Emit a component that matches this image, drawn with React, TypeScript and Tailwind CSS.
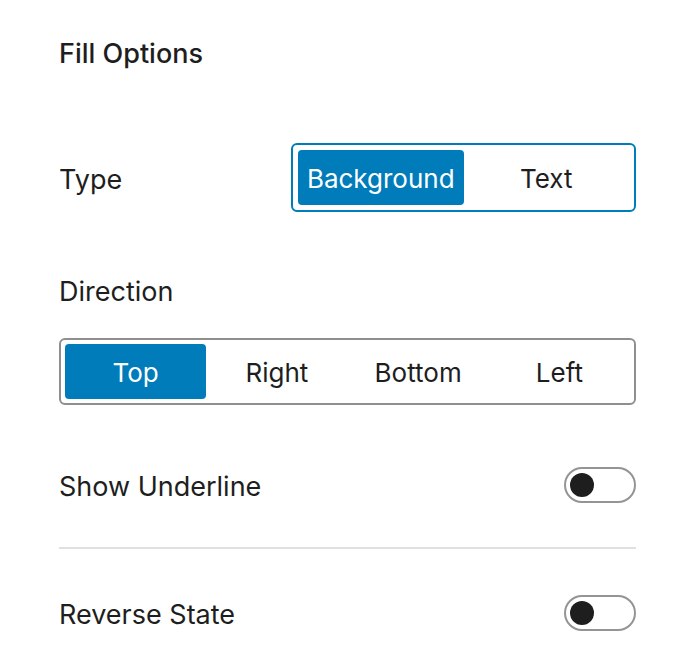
import { useState } from 'react';

function Toggle() {
    return (
        <div className="w-[72px] h-[36px] rounded-full border-2 border-[#949494] bg-white flex items-center px-[4px]">
            <div className="w-[24px] h-[24px] rounded-full bg-[#1e1e1e]" />
        </div>
    );
}

export default function App() {
    const [fillType, setFillType] = useState('Background');
    const [direction, setDirection] = useState('Top');

    return (
        <div
            className="w-[686px] h-[666px] bg-white pl-[59px] pr-[50px] text-[#1e1e1e]"
            style={{ fontFamily: 'Inter, "Noto Sans", sans-serif' }}
        >
            {/* Header */}
            <h2 className="pt-[34px] text-[27px] leading-[40px] font-medium">Fill Options</h2>

            {/* Type */}
            <div className="mt-[69px] flex items-center justify-between h-[69px]">
                <span className="text-[27px] leading-[36px] pt-[4px]">Type</span>
                <div className="w-[345px] h-[69px] border-2 border-[#007cba] rounded-[6px] p-[5px] flex">
                    {['Background', 'Text'].map((t) => (
                        <button
                            key={t}
                            onClick={() => setFillType(t)}
                            className={`flex-1 rounded-[4px] text-[26px] pt-[2px] ${fillType === t ? 'bg-[#007cba] text-white' : 'text-[#1e1e1e]'}`}
                        >
                            {t}
                        </button>
                    ))}
                </div>
            </div>

            {/* Direction */}
            <div className="mt-[62px] text-[27px] leading-[36px]">Direction</div>
            <div className="mt-[28px] h-[67px] border-2 border-[#8f8f8f] rounded-[6px] p-[4px] flex">
                {['Top', 'Right', 'Bottom', 'Left'].map((d) => (
                    <button
                        key={d}
                        onClick={() => setDirection(d)}
                        className={`flex-1 rounded-[4px] text-[26px] pt-[2px] ${direction === d ? 'bg-[#007cba] text-white' : 'text-[#1e1e1e]'}`}
                    >
                        {d}
                    </button>
                ))}
            </div>

            {/* Toggles */}
            <div className="mt-[62px] h-[36px] flex items-center justify-between">
                <span className="text-[27px] leading-[36px] pt-[3px]">Show Underline</span>
                <Toggle />
            </div>
            <div className="mt-[44px] h-[2px] bg-[#e0e0e0]" />
            <div className="mt-[46px] h-[36px] flex items-center justify-between">
                <span className="text-[27px] leading-[36px] pt-[3px]">Reverse State</span>
                <Toggle />
            </div>
        </div>
    );
}
